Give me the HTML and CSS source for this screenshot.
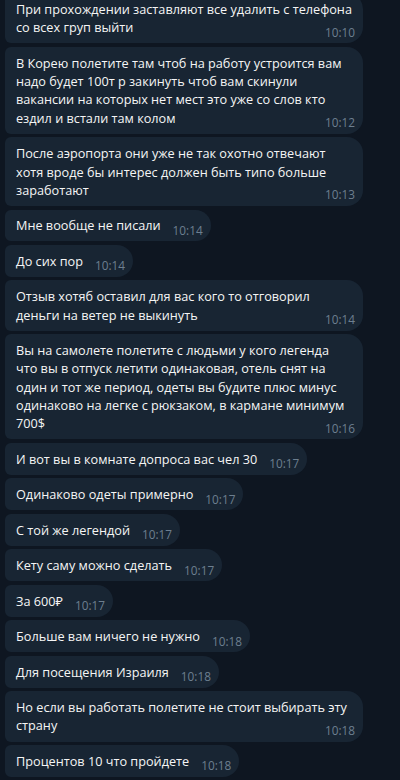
FILE: index.html
```html
<!DOCTYPE html>
<html lang="ru">
<head>
  <meta charset="UTF-8">
  <meta name="viewport" content="width=device-width, initial-scale=1.0">
  <title>Чат</title>
  <link rel="stylesheet" href="styles.css">
</head>
<body>
  <main class="chat">
    <div class="msg">При прохождении заставляют все удалить с телефона со всех груп выйти<span class="time">10:10</span></div>
    <div class="msg">В Корею полетите там чтоб на работу устроится вам надо будет 100т р закинуть чтоб вам скинули вакансии на которых нет мест это уже со слов кто ездил и встали там колом<span class="time">10:12</span></div>
    <div class="msg">После аэропорта они уже не так охотно отвечают хотя вроде бы интерес должен быть типо больше заработают<span class="time">10:13</span></div>
    <div class="msg">Мне вообще не писали<span class="time">10:14</span></div>
    <div class="msg">До сих пор<span class="time">10:14</span></div>
    <div class="msg">Отзыв хотяб оставил для вас кого то отговорил деньги на ветер не выкинуть<span class="time">10:14</span></div>
    <div class="msg">Вы на самолете полетите с людьми у кого легенда<br>что вы в отпуск летити одинаковая, отель снят на один и тот же период, одеты вы будите плюс минус одинаково на легке с рюкзаком, в кармане минимум 700$<span class="time">10:16</span></div>
    <div class="msg">И вот вы в комнате допроса вас чел 30<span class="time">10:17</span></div>
    <div class="msg">Одинаково одеты примерно<span class="time">10:17</span></div>
    <div class="msg">С той же легендой<span class="time">10:17</span></div>
    <div class="msg">Кету саму можно сделать<span class="time">10:17</span></div>
    <div class="msg">За 600₽<span class="time">10:17</span></div>
    <div class="msg">Больше вам ничего не нужно<span class="time">10:18</span></div>
    <div class="msg">Для посещения Израиля<span class="time">10:18</span></div>
    <div class="msg">Но если вы работать полетите не стоит выбирать эту страну<span class="time">10:18</span></div>
    <div class="msg">Процентов 10 что пройдете<span class="time">10:18</span></div>
  </main>
</body>
</html>
```

FILE: styles.css
```css
body {
  margin: 0;
  background-color: #0e1621;
  font-family: 'Open Sans', 'Noto Sans', sans-serif;
  color: #f5f5f5;
  overflow: hidden;
}

.chat {
  height: 100vh;
  display: flex;
  flex-direction: column;
  justify-content: flex-end;
  align-items: flex-start;
  gap: 3.6px;
  padding: 0 0 3px 5px;
  box-sizing: border-box;
  overflow: hidden;
}

.msg {
  flex-shrink: 0;
  max-width: 358px;
  box-sizing: border-box;
  padding: 6.8px 8px 6.8px 11px;
  background-color: #182533;
  border-radius: 6px 16px 16px 6px;
  font-size: 12.7px;
  line-height: 18.3px;
}

.time {
  float: right;
  position: relative;
  top: 4.5px;
  margin-left: 12px;
  font-size: 11.8px;
  line-height: 18.3px;
  color: #6d7f8f;
}
```
